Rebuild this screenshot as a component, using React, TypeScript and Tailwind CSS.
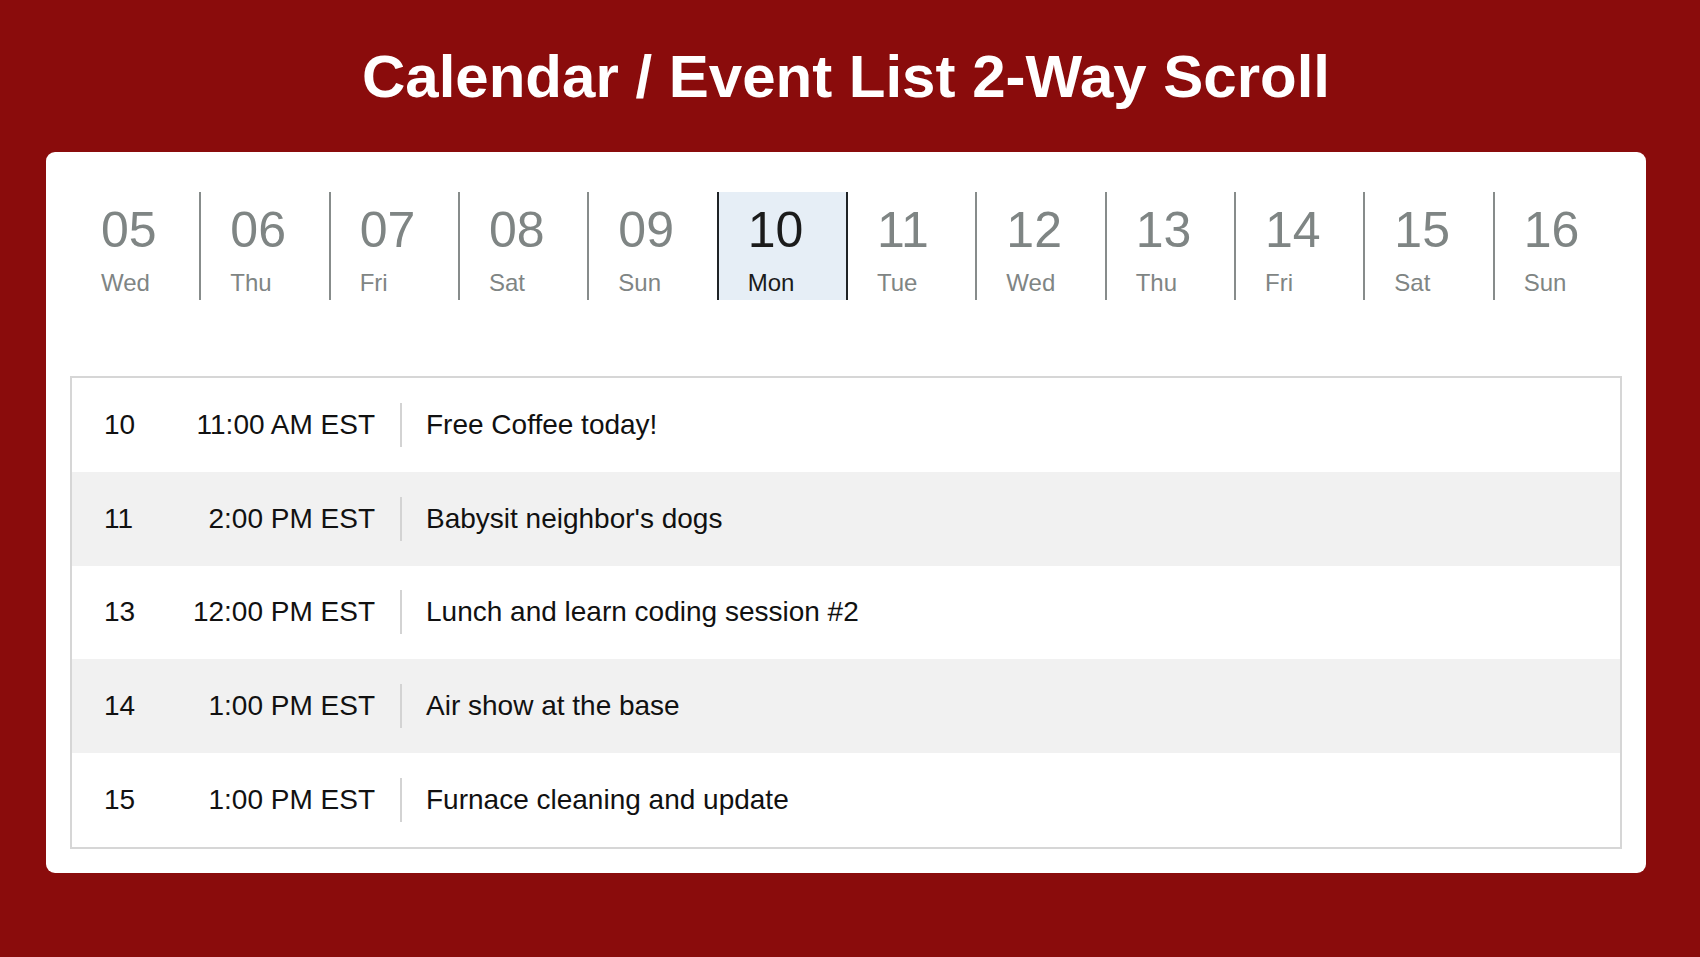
import React from "react";

const days = [
  { n: "05", d: "Wed" },
  { n: "06", d: "Thu" },
  { n: "07", d: "Fri" },
  { n: "08", d: "Sat" },
  { n: "09", d: "Sun" },
  { n: "10", d: "Mon" },
  { n: "11", d: "Tue" },
  { n: "12", d: "Wed" },
  { n: "13", d: "Thu" },
  { n: "14", d: "Fri" },
  { n: "15", d: "Sat" },
  { n: "16", d: "Sun" },
];

const selected = 5;

const events = [
  { day: "10", time: "11:00 AM EST", title: "Free Coffee today!" },
  { day: "11", time: "2:00 PM EST", title: "Babysit neighbor's dogs" },
  { day: "13", time: "12:00 PM EST", title: "Lunch and learn coding session #2" },
  { day: "14", time: "1:00 PM EST", title: "Air show at the base" },
  { day: "15", time: "1:00 PM EST", title: "Furnace cleaning and update" },
];

export default function App() {
  return (
    <div className="min-h-screen bg-[#8a0c0c] pr-[8px] font-['Liberation_Sans',Arial,sans-serif]">
      <h1 className="pt-[42px] text-center text-[60px] font-bold leading-[70px] text-white">
        Calendar / Event List 2-Way Scroll
      </h1>
      <div className="mx-auto mt-[40px] w-[1600px] rounded-[9px] bg-white px-6 pt-[40px] pb-6">
        <div className="grid grid-cols-12">
          {days.map((day, i) => {
            const isSel = i === selected;
            const border =
              i === 0
                ? "border-transparent"
                : i === selected || i === selected + 1
                ? "border-[#1f2326]"
                : "border-[#878c8b]";
            return (
              <div
                key={i}
                className={
                  "h-[108px] border-l-2 pl-[29px] pt-2 " +
                  border +
                  (isSel ? " bg-[#e6eef6] text-[#1b1b1b]" : " text-[#7f8584]")
                }
              >
                <div className="text-[50px] leading-[60px]">{day.n}</div>
                <div className="mt-2 text-[24px] leading-[29px]">{day.d}</div>
              </div>
            );
          })}
        </div>
        <div className="mt-[76px] border-2 border-[#d6d6d6]">
          {events.map((e, i) => (
            <div
              key={i}
              className={
                "flex h-[93.8px] items-center text-[28px] text-[#111111] " +
                (i % 2 === 1 ? "bg-[#f1f1f1]" : "bg-white")
              }
            >
              <div className="w-[100px] pl-[32px]">{e.day}</div>
              <div className="w-[203px] text-right">{e.time}</div>
              <div className="ml-[25px] mr-[24px] h-[44px] w-[2px] bg-[#d3d3d3]" />
              <div>{e.title}</div>
            </div>
          ))}
        </div>
      </div>
    </div>
  );
}
